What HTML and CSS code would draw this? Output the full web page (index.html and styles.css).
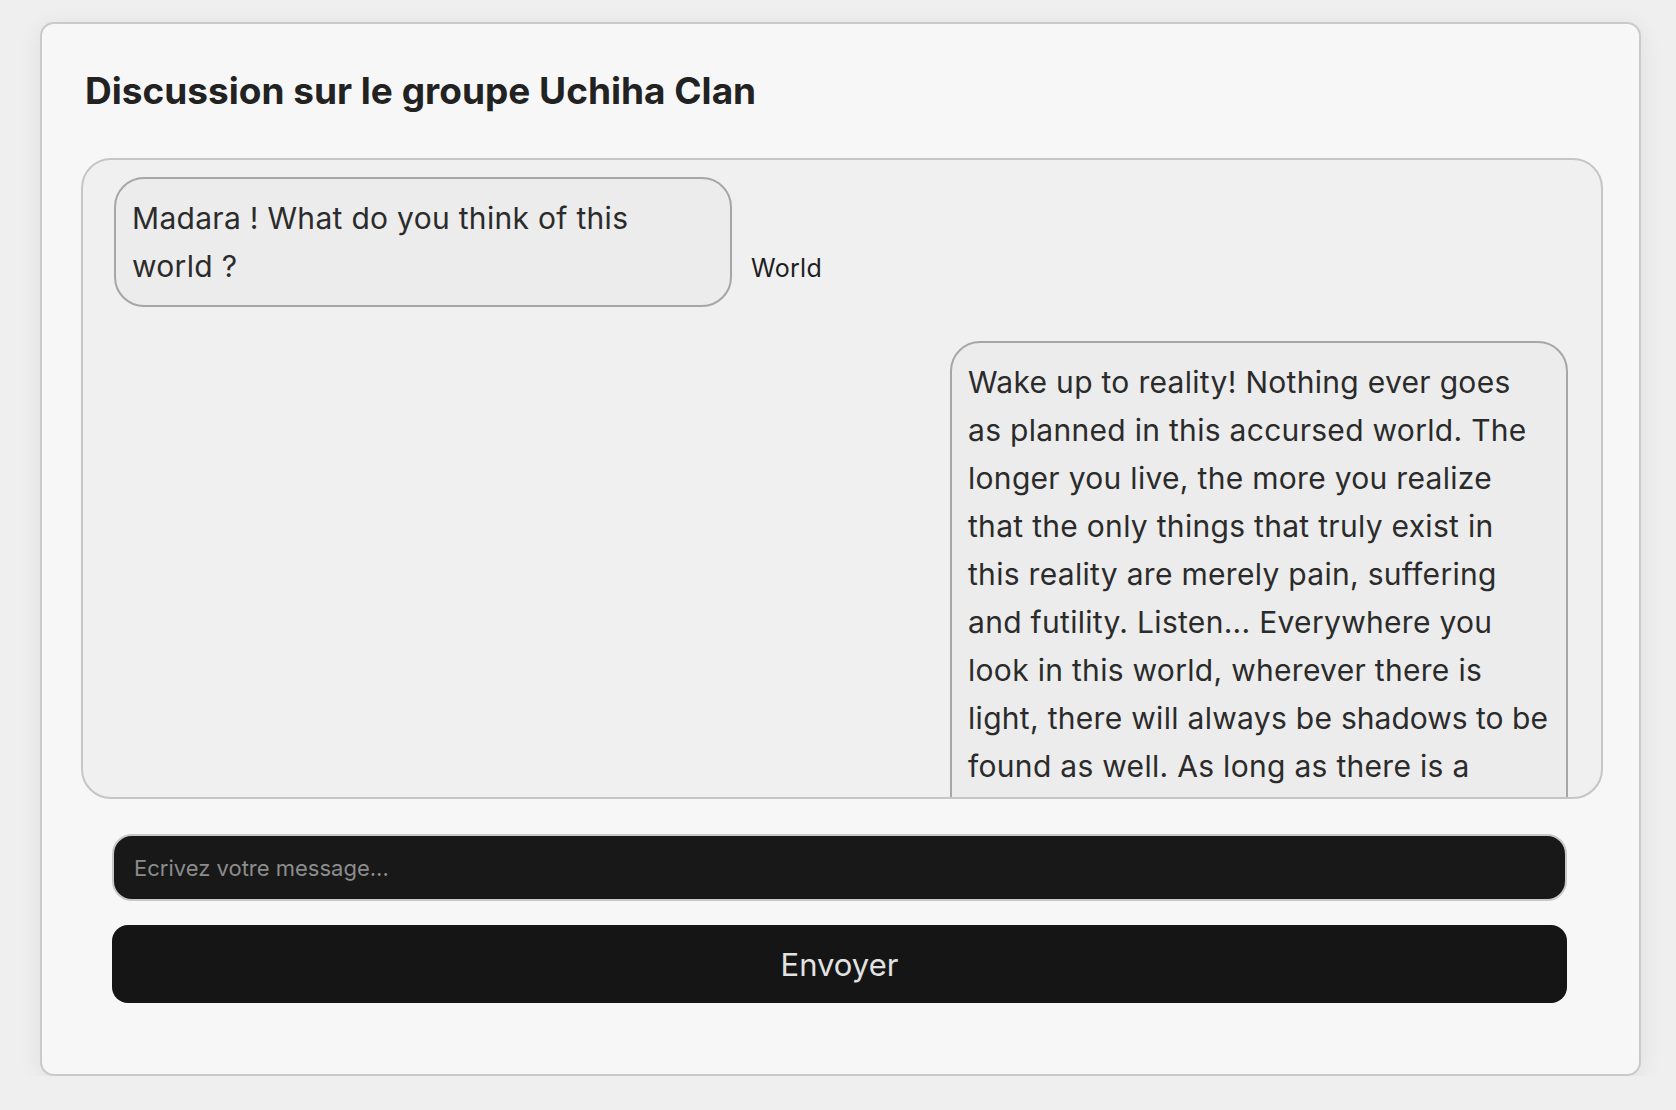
FILE: index.html
```html
<!DOCTYPE html>
<html lang="fr">
<head>
<meta charset="utf-8">
<title>Discussion</title>
<link rel="stylesheet" href="styles.css">
</head>
<body>
<div class="page">
  <div class="card">
    <h1 class="title">Discussion sur le groupe Uchiha Clan</h1>
    <div class="chat">
      <div class="row row-left">
        <div class="bubble">Madara ! What do you think of this world ?</div>
        <span class="sender">World</span>
      </div>
      <div class="row row-right">
        <div class="bubble">Wake up to reality! Nothing ever goes as planned in this accursed world. The longer you live, the more you realize that the only things that truly exist in this reality are merely pain, suffering and futility. Listen... Everywhere you look in this world, wherever there is light, there will always be <span class="tight">shadows to be</span> found as well. As long as there is a concept of victors, the vanquished will also exist.</div>
      </div>
    </div>
    <form class="composer">
      <input class="field" type="text" placeholder="Ecrivez votre message...">
      <button class="send" type="button">Envoyer</button>
    </form>
  </div>
</div>
</body>
</html>
```
FILE: styles.css
```css
* { box-sizing: border-box; }
html, body { margin: 0; padding: 0; }
body {
  background: #efefef;
  font-family: Inter, "Noto Sans", sans-serif;
  color: #2b2b2b;
}
.page {
  padding: 22px 35px 0 40px;
}
.card {
  width: 1601px;
  height: 1054px;
  background: #f7f7f7;
  border: 2px solid #cacaca;
  border-radius: 14px;
  box-shadow: 0 4px 24px rgba(0, 0, 0, 0.07);
  padding: 45px 36px 70px 39px;
}
.title {
  margin: 0 0 45px 4px;
  font-size: 37px;
  line-height: 1.2;
  font-weight: 700;
  color: #222;
  letter-spacing: 0;
}
.chat {
  height: 641px;
  background: #f0f0f0;
  border: 2px solid #c5c5c5;
  border-radius: 30px;
  padding: 17px 33px 0 31px;
  overflow: hidden;
}
.row {
  display: flex;
  align-items: last baseline;
  gap: 19px;
}
.row-right {
  justify-content: flex-end;
  margin-top: 34px;
}
.bubble {
  box-sizing: content-box;
  width: 583px;
  background: #ececec;
  border: 2px solid #a6a6a6;
  border-radius: 30px;
  padding: 15px 15px 15px 16px;
  font-size: 30px;
  letter-spacing: 0.3px;
  line-height: 48px;
  color: #2b2b2b;
}
.tight {
  letter-spacing: 0;
}
.sender {
  font-size: 25px;
  letter-spacing: 0.3px;
  color: #1e1e1e;
}
.composer {
  display: flex;
  flex-direction: column;
  gap: 24px;
  margin-top: 35px;
  padding: 0 36px 0 31px;
}
.field {
  height: 67px;
  background: #181818;
  border: 2px solid #c8c8c8;
  border-radius: 20px;
  padding: 0 20px;
  font-family: Inter, "Noto Sans", sans-serif;
  font-size: 22px;
  color: #e0e0e0;
  outline: none;
}
.field::placeholder {
  color: #8c8c8c;
}
.send {
  height: 78px;
  background: #151515;
  border: none;
  border-radius: 16px;
  font-family: Inter, "Noto Sans", sans-serif;
  font-size: 31px;
  color: #e2e2e2;
}
```
